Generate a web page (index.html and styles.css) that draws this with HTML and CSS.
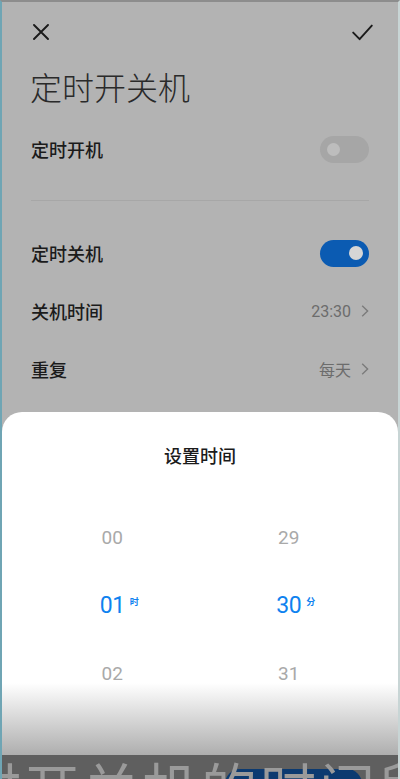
FILE: index.html
```html
<!DOCTYPE html>
<html lang="zh-CN">
<head>
<meta charset="utf-8">
<title>定时开关机</title>
<link rel="stylesheet" href="styles.css">
</head>
<body>
<div class="screen">
  <header class="topbar">
    <svg class="icon-close" width="16" height="16" viewBox="0 0 16 16"><path d="M1 1L15 15M15 1L1 15" stroke="#1b1b1b" stroke-width="1.9" fill="none" stroke-linecap="round"/></svg>
    <svg class="icon-check" width="21" height="17" viewBox="0 0 21 17"><path d="M1.2 8.6L7.6 15.2L19.8 1.6" stroke="#1b1b1b" stroke-width="1.9" fill="none" stroke-linecap="round" stroke-linejoin="round"/></svg>
  </header>
  <h1 class="title">定时开关机</h1>
  <div class="list">
    <div class="row"><span class="label">定时开机</span><span class="toggle"><span class="knob"></span></span></div>
    <div class="divider"></div>
    <div class="row"><span class="label">定时关机</span><span class="toggle on"><span class="knob"></span></span></div>
    <div class="row"><span class="label">关机时间</span><span class="value"><span class="num">23:30</span><svg width="8" height="12" viewBox="0 0 8 12"><path d="M1.2 0.8L6.6 6L1.2 11.2" stroke="#7b7b7b" stroke-width="1.4" fill="none"/></svg></span></div>
    <div class="row"><span class="label">重复</span><span class="value"><span>每天</span><svg width="8" height="12" viewBox="0 0 8 12"><path d="M1.2 0.8L6.6 6L1.2 11.2" stroke="#7b7b7b" stroke-width="1.4" fill="none"/></svg></span></div>
  </div>
  <section class="sheet">
    <div class="sheet-title">设置时间</div>
    <div class="picker">
      <div class="col">
        <div class="cell"><span class="n">00</span></div>
        <div class="cell sel"><span class="n">01<span class="unit">时</span></span></div>
        <div class="cell"><span class="n">02</span></div>
      </div>
      <div class="col">
        <div class="cell"><span class="n">29</span></div>
        <div class="cell sel"><span class="n">30<span class="unit">分</span></span></div>
        <div class="cell"><span class="n">31</span></div>
      </div>
    </div>
  </section>
  <div class="fade"></div>
  <div class="caption-band">
    <span class="blob"></span>
    <span class="caption">时开关机的时间段</span>
  </div>
</div>
</body>
</html>
```
FILE: styles.css
```css
html, body {
  margin: 0;
  padding: 0;
  background: #b3b3b3;
}
.screen {
  position: relative;
  width: 400px;
  height: 779px;
  box-sizing: border-box;
  border-top: 2px solid #8d8d8d;
  border-left: 2px solid #6fa5b4;
  border-right: 2px solid #c8d5d5;
  background: #b3b3b3;
  display: flex;
  flex-direction: column;
  overflow: hidden;
  font-family: "Noto Sans CJK SC", "Noto Sans", sans-serif;
  color: #1b1b1b;
}
.topbar {
  height: 60px;
  flex-shrink: 0;
  display: flex;
  align-items: center;
  justify-content: space-between;
  padding: 0 25px 0 31px;
}
.title {
  margin: 0;
  height: 48px;
  line-height: 48px;
  font-size: 32px;
  font-weight: 300;
  padding-left: 28px;
  color: #2a2a2a;
}
.list {
  margin-top: 10px;
  padding: 0 29px;
}
.row {
  height: 58px;
  display: flex;
  align-items: center;
  justify-content: space-between;
}
.label {
  font-size: 18px;
  font-weight: 500;
  color: #1b1b1b;
}
.divider {
  height: 1px;
  background: #a7a7a7;
  margin: 22px 0 23px;
}
.toggle {
  width: 49px;
  height: 27px;
  box-sizing: border-box;
  border-radius: 14px;
  background: #a6a6a6;
  display: flex;
  align-items: center;
  padding: 0 7px;
}
.toggle .knob {
  width: 13px;
  height: 13px;
  border-radius: 50%;
  background: #bdbdbd;
}
.toggle.on {
  background: #0b5bb2;
  justify-content: flex-end;
  padding: 0 6px;
}
.toggle.on .knob {
  width: 14px;
  height: 14px;
  background: #d6d6d6;
}
.value {
  display: flex;
  align-items: center;
  gap: 10px;
  font-size: 16px;
  color: #6c6c6c;
}
.value .num {
  font-family: Roboto, "Noto Sans", sans-serif;
}
.sheet {
  margin-top: auto;
  height: 367px;
  flex-shrink: 0;
  background: #fff;
  border-radius: 20px 20px 0 0;
  box-sizing: border-box;
  padding-top: 31px;
}
.sheet-title {
  text-align: center;
  font-size: 18px;
  line-height: 24px;
  font-weight: 500;
  color: #1b1b1b;
}
.picker {
  margin-top: 37px;
  display: grid;
  grid-template-columns: 1fr 1fr;
  padding: 0 21px 0 22px;
}
.cell {
  height: 68px;
  display: flex;
  align-items: center;
  justify-content: center;
}
.n {
  position: relative;
  font-family: Roboto, "Noto Sans", sans-serif;
  font-size: 19px;
  line-height: 24px;
  color: #a9a9a9;
}
.sel .n {
  font-size: 23px;
  color: #0f82ef;
  letter-spacing: -0.5px;
}
.unit {
  position: absolute;
  left: calc(100% + 5px);
  top: 3px;
  font-family: "Noto Sans CJK SC", sans-serif;
  font-size: 9px;
  line-height: 10px;
  font-weight: 700;
  letter-spacing: 0;
  white-space: nowrap;
}
.fade {
  position: absolute;
  left: 0;
  right: 0;
  bottom: 24px;
  height: 72px;
  background: linear-gradient(to bottom, rgba(178, 178, 178, 0), rgba(174, 174, 174, 1));
}
.caption-band {
  position: absolute;
  left: 0;
  right: 0;
  bottom: 0;
  height: 24px;
  background: #5f5f5f;
  overflow: hidden;
}
.blob {
  position: absolute;
  left: 223px;
  top: 14px;
  width: 137px;
  height: 30px;
  border-radius: 15px;
  background: #0c3a70;
}
.caption {
  position: absolute;
  left: -37px;
  top: 3px;
  white-space: nowrap;
  font-size: 56px;
  line-height: 56px;
  letter-spacing: 3px;
  color: #9a9a9a;
}
```
